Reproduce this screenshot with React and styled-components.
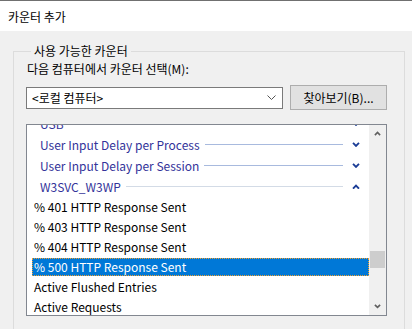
import React from "react";
import styled, { createGlobalStyle } from "styled-components";

const GlobalStyle = createGlobalStyle`
  html, body {
    margin: 0;
    padding: 0;
    background: #f0f0f0;
  }
  body {
    font-family: "Noto Sans", "Noto Sans CJK KR", sans-serif;
    font-size: 12px;
    color: #000;
  }
`;

const Window = styled.div`
  width: 412px;
  height: 329px;
  overflow: hidden;
  background: #f0f0f0;
`;

const TitleBar = styled.div`
  height: 30px;
  background: #fff;
  border-top: 1px solid #707070;
  display: flex;
  align-items: center;
  padding-left: 8px;
  font-size: 12px;
  font-family: "Noto Sans CJK KR", sans-serif;
`;

const Group = styled.fieldset`
  margin: 12px 7px 0 13px;
  padding: 2px 16px 20px 12px;
  border: 1px solid #dcdcdc;
  border-radius: 0;
  font-family: "Noto Sans CJK KR", sans-serif;
`;

const Legend = styled.legend`
  padding: 0 3px;
  margin-left: 5px;
  font-size: 12px;
  line-height: 16px;
`;

const FieldLabel = styled.div`
  line-height: 16px;
  margin-left: 1px;
  margin-bottom: 8px;
`;

const Controls = styled.div`
  display: flex;
  align-items: center;
  gap: 7px;
`;

const Combo = styled.div`
  width: 257px;
  height: 22px;
  box-sizing: border-box;
  border: 1px solid #7a7a7a;
  background: #fff;
  display: flex;
  align-items: center;
  justify-content: space-between;
  padding: 0 6px 0 5px;
`;

const Button = styled.div`
  width: 97px;
  height: 25px;
  box-sizing: border-box;
  border: 1px solid #adadad;
  background: #e1e1e1;
  display: flex;
  align-items: center;
  justify-content: center;
`;

const ListBox = styled.div`
  margin-top: 14px;
  width: 361px;
  height: 192px;
  box-sizing: border-box;
  border: 1px solid #828790;
  background: #fff;
  display: flex;
  overflow: hidden;
`;

const Rows = styled.div`
  flex: 1;
  overflow: hidden;
`;

const Scroll = styled.div`
  width: 17px;
  background: #f0f0f0;
  display: flex;
  flex-direction: column;
  align-items: center;
`;

const ScrollArrow = styled.div`
  height: 17px;
  width: 17px;
  display: flex;
  align-items: center;
  justify-content: center;
`;

const Track = styled.div`
  flex: 1;
  width: 100%;
  display: flex;
  flex-direction: column;
  justify-content: flex-end;
`;

const Thumb = styled.div`
  width: 15px;
  height: 17px;
  margin: 0 1px 30px 1px;
  background: #cdcdcd;
`;

const CategoryRow = styled.div`
  height: 21px;
  display: flex;
  align-items: center;
  padding-left: 13px;
  padding-right: 9px;
  color: #33339a;
  margin-top: ${(p) => (p.offset ? `${p.offset}px` : "0")};
`;

const CategoryLine = styled.div`
  flex: 1;
  height: 1px;
  margin: 0 9px 0 5px;
  background: ${(p) => (p.faint ? "#d3dbe6" : "#a8bade")};
`;

const ItemRow = styled.div`
  height: 20px;
  display: flex;
  align-items: center;
  padding-left: 5px;
`;

const ItemText = styled.div`
  flex: ${(p) => (p.selected ? 1 : "none")};
  height: 18px;
  line-height: 18px;
  box-sizing: border-box;
  padding-left: 2px;
  background: ${(p) => (p.selected ? "#0078d7" : "transparent")};
  color: ${(p) => (p.selected ? "#fff" : "#000")};
  outline: ${(p) => (p.selected ? "1px dotted #f0a030" : "none")};
  outline-offset: -1px;
`;

const Chevron = ({ up, color = "#1a3c96", size = 8 }) => (
  <svg width={size} height={size * 0.7} viewBox="0 0 8 6">
    <path
      d={up ? "M0.8 5 L4 1.8 L7.2 5" : "M0.8 1 L4 4.2 L7.2 1"}
      fill="none"
      stroke={color}
      strokeWidth="2"
    />
  </svg>
);

const categories = [
  { name: "USB", up: false, offset: -12 },
  { name: "User Input Delay per Process", up: false },
  { name: "User Input Delay per Session", up: false },
  { name: "W3SVC_W3WP", up: true, faint: true },
];

const items = [
  "% 401 HTTP Response Sent",
  "% 403 HTTP Response Sent",
  "% 404 HTTP Response Sent",
  "% 500 HTTP Response Sent",
  "Active Flushed Entries",
  "Active Requests",
];

export default function App() {
  return (
    <Window>
      <GlobalStyle />
      <TitleBar>카운터 추가</TitleBar>
      <Group>
        <Legend>사용 가능한 카운터</Legend>
        <FieldLabel>다음 컴퓨터에서 카운터 선택(M):</FieldLabel>
        <Controls>
          <Combo>
            <span>&lt;로컬 컴퓨터&gt;</span>
            <svg width="9" height="6" viewBox="0 0 9 6">
              <path d="M0.5 0.5 L4.5 4.5 L8.5 0.5" fill="none" stroke="#555" strokeWidth="1" />
            </svg>
          </Combo>
          <Button>찾아보기(B)...</Button>
        </Controls>
        <ListBox>
          <Rows>
            {categories.map((c) => (
              <CategoryRow key={c.name} offset={c.offset}>
                <span>{c.name}</span>
                <CategoryLine faint={c.faint} />
                <Chevron up={c.up} />
              </CategoryRow>
            ))}
            {items.map((it) => (
              <ItemRow key={it}>
                <ItemText selected={it.startsWith("% 500")}>{it}</ItemText>
              </ItemRow>
            ))}
          </Rows>
          <Scroll>
            <ScrollArrow>
              <Chevron up color="#606060" size={7} />
            </ScrollArrow>
            <Track>
              <Thumb />
            </Track>
            <ScrollArrow>
              <Chevron color="#606060" size={7} />
            </ScrollArrow>
          </Scroll>
        </ListBox>
      </Group>
    </Window>
  );
}
